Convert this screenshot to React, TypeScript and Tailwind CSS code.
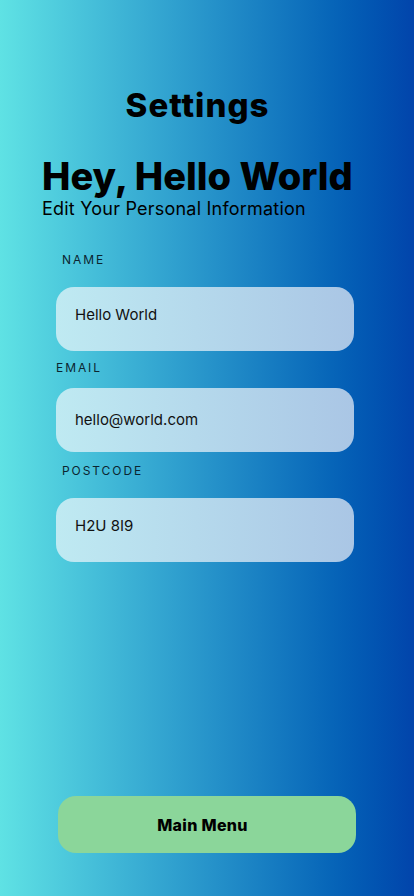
const fieldBox =
  "flex h-[64px] w-[298px] items-center rounded-[18px] bg-linear-to-r from-[#bfeaf2] to-[#aac6e5] pl-[19px] text-[15px] leading-[20px] text-[#111]"

const labelText = "text-[12px] leading-[16px] tracking-[0.16em] text-[#0b2530]"

export default function App() {
  return (
    <div
      className="flex h-[896px] w-full flex-col bg-linear-to-r from-[#5fe2e4] to-[#0244ab]"
      style={{ fontFamily: "Inter, 'Noto Sans', sans-serif" }}
    >
      <h1 className="mt-[85px] -ml-[19px] text-center text-[33px] font-extrabold leading-[40px] tracking-[0.03em] text-black">
        Settings
      </h1>

      <div className="mt-[29px] pl-[42px]">
        <h2 className="text-[38px] font-extrabold leading-[44px] text-black">Hey, Hello World</h2>
        <p className="text-[18px] leading-[22px] tracking-[0.012em] text-black">
          Edit Your Personal Information
        </p>
      </div>

      <div className="mt-[32px] flex flex-col pl-[56px]">
        <span className={`${labelText} pl-[6px]`}>NAME</span>
        <div className={`${fieldBox} mt-[19px] pb-2`}>Hello World</div>

        <span className={`${labelText} mt-[9px]`}>EMAIL</span>
        <div className={`${fieldBox} mt-[12px]`}>hello@world.com</div>

        <span className={`${labelText} mt-[11px] pl-[6px]`}>POSTCODE</span>
        <div className={`${fieldBox} mt-[19px] pb-2`}>H2U 8I9</div>
      </div>

      <div className="mt-auto pb-[43px] pl-[58px]">
        <button className="flex h-[57px] w-[298px] items-center justify-center rounded-[18px] bg-[#8bd69a] pr-[9px] text-[16px] font-extrabold tracking-[0.02em] text-black">
          Main Menu
        </button>
      </div>
    </div>
  )
}
